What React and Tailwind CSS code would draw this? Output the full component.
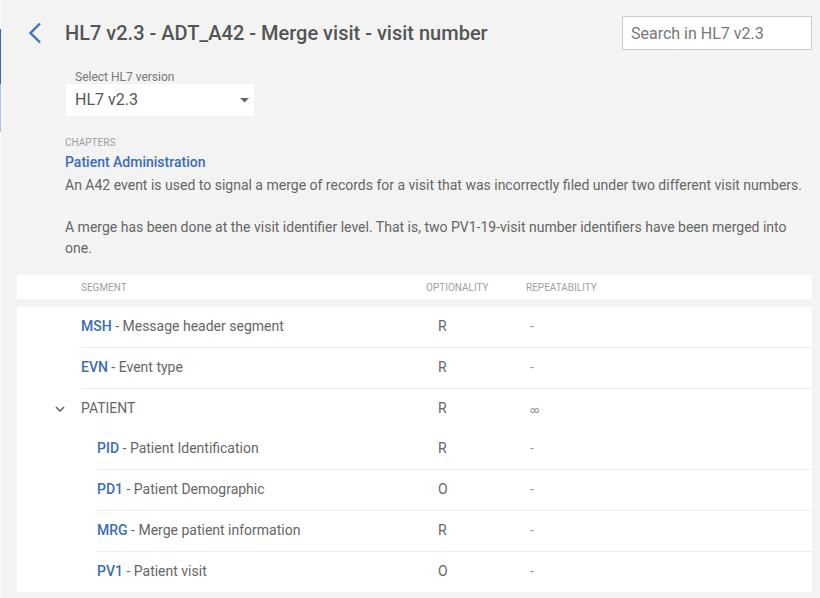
const rows = [
    { code: "MSH", name: "Message header segment", opt: "R", rep: "-" },
    { code: "EVN", name: "Event type", opt: "R", rep: "-" },
    { group: "PATIENT", opt: "R", rep: "∞" },
    { code: "PID", name: "Patient Identification", opt: "R", rep: "-", child: true },
    { code: "PD1", name: "Patient Demographic", opt: "O", rep: "-", child: true },
    { code: "MRG", name: "Merge patient information", opt: "R", rep: "-", child: true },
    { code: "PV1", name: "Patient visit", opt: "O", rep: "-", child: true, last: true },
];

function SegmentRow({ row }) {
    const bordered = !row.group && !row.last;

    return (
        <div className="flex">
            {/* indent / toggle */}
            <div className={row.child ? "w-[80px] shrink-0" : "w-[64px] shrink-0 flex items-center"}>
                {row.group && (
                    <svg className="ml-[38px] w-[10px] h-[6px]" viewBox="0 0 10 6" fill="none">
                        <polyline points="1,1 5,5 9,1" stroke="#666" strokeWidth="1.6" />
                    </svg>
                )}
            </div>

            <div
                className={`flex-1 flex items-center pb-[2px] text-[14px] ${
                    bordered ? "h-[41px] border-b border-[#efefef]" : "h-[40px]"
                }`}
            >
                <div className="flex-1 text-[#666]">
                    {row.group ? (
                        row.group
                    ) : (
                        <>
                            <span className="font-medium text-[#3b6db3]">{row.code}</span> - {row.name}
                        </>
                    )}
                </div>
                <div className="w-[100px] pl-[12px] text-[#666]">{row.opt}</div>
                <div className="w-[286px] pl-[4px] text-[#999]">
                    {row.rep === "∞" ? <span className="text-[9px] text-[#777]">∞</span> : row.rep}
                </div>
            </div>
        </div>
    );
}

export default function App() {
    return (
        <div className="w-[820px] h-[598px] overflow-hidden bg-[#f3f3f3] flex font-['Roboto',sans-serif]">

            {/* LEFT EDGE */}
            <div className="w-px shrink-0 bg-[#fbfbfb] flex flex-col">
                <div className="h-[29px]" />
                <div className="h-[55px] bg-[#2e6bb8]" />
                <div className="h-[48px] bg-[#a9c3e5]" />
            </div>

            <div className="flex-1 pl-[16px] pr-[8px]">

                {/* HEADER */}
                <div className="flex items-center h-[34px] mt-[16px]">
                    <svg className="ml-[11px] w-[14px] h-[22px]" viewBox="0 0 14 22" fill="none">
                        <polyline points="12,1.5 2.5,11 12,20.5" stroke="#3b73bf" strokeWidth="2.4" />
                    </svg>
                    <h1 className="ml-[23px] text-[20px] font-medium text-[#555]">
                        HL7 v2.3 - ADT_A42 - Merge visit - visit number
                    </h1>
                    <input
                        placeholder="Search in HL7 v2.3"
                        className="ml-auto w-[190px] h-[34px] border border-[#cccccc] bg-white px-[8px] text-[16px] text-[#555] placeholder:text-[#777] outline-none"
                    />
                </div>

                {/* VERSION SELECT */}
                <div className="ml-[49px] w-[188px] mt-[20px]">
                    <div className="pl-[9px] text-[12px] leading-[14px] text-[#777]">Select HL7 version</div>
                    <div className="h-[32px] bg-white flex items-center pl-[9px] pr-[5px] text-[16px] text-[#555]">
                        <span className="flex-1">HL7 v2.3</span>
                        <svg className="w-[9px] h-[5px]" viewBox="0 0 9 5">
                            <polygon points="0,0 9,0 4.5,4.5" fill="#666" />
                        </svg>
                    </div>
                </div>

                {/* CHAPTER */}
                <div className="ml-[48px] mt-[21px]">
                    <div className="text-[10px] leading-[12px] text-[#9e9e9e] uppercase">Chapters</div>
                    <div className="mt-[3px] text-[14px] leading-[20px] font-medium text-[#3b6db3]">
                        Patient Administration
                    </div>
                    <p className="mt-[3px] text-[14px] leading-[21px] text-[#666] whitespace-pre-line">
                        {"An A42 event is used to signal a merge of records for a visit that was incorrectly filed under two different visit numbers.\n\nA merge has been done at the visit identifier level. That is, two PV1-19-visit number identifiers have been merged into one."}
                    </p>
                </div>

                {/* TABLE HEAD */}
                <div className="mt-[16px] h-[24px] bg-white flex items-center pl-[64px] text-[10px] text-[#a0a0a0] uppercase">
                    <div className="flex-1">Segment</div>
                    <div className="w-[100px]">Optionality</div>
                    <div className="w-[286px]">Repeatability</div>
                </div>

                {/* TABLE BODY */}
                <div className="mt-[8px] bg-white">
                    {rows.map((row) => (
                        <SegmentRow key={row.code || row.group} row={row} />
                    ))}
                </div>

            </div>
        </div>
    );
}
